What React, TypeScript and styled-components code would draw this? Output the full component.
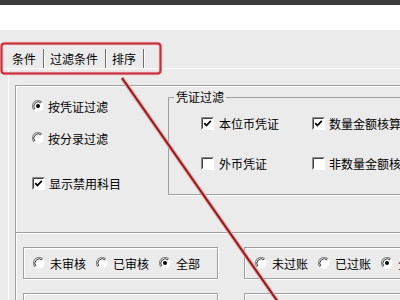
import React from "react";
import styled, { createGlobalStyle } from "styled-components";

const GlobalStyle = createGlobalStyle`
  * { box-sizing: border-box; }
  html, body { margin: 0; padding: 0; background: #ebebeb; }
  body {
    font-family: "Noto Sans CJK SC", "Noto Sans", sans-serif;
    font-size: 12px;
    color: #000;
  }
`;

const RadioMark = ({ checked }: { checked?: boolean }) => (
  <MarkSvg width={12} height={12} viewBox="0 0 12 12">
    <circle cx="6" cy="6" r="5.5" fill="#fff" />
    <path d="M2.1 9.9 A5.5 5.5 0 0 1 9.9 2.1" fill="none" stroke="#8a8a8a" strokeWidth="1.2" />
    <path d="M2.9 9.1 A4.4 4.4 0 0 1 9.1 2.9" fill="none" stroke="#3a3a3a" strokeWidth="1" />
    {checked && <circle cx="6" cy="6" r="2" fill="#000" />}
  </MarkSvg>
);

const CheckMark = ({ checked }: { checked?: boolean }) => (
  <MarkSvg width={13} height={13} viewBox="0 0 13 13">
    <rect x="0" y="0" width="13" height="13" fill="#fff" />
    <path d="M0.5 12.5 V0.5 H12.5" fill="none" stroke="#8a8a8a" strokeWidth="1" />
    <path d="M1.5 11.5 V1.5 H11.5" fill="none" stroke="#404040" strokeWidth="1" />
    {checked && (
      <path d="M3.3 6.2 L5.4 8.5 L9.8 3.8" fill="none" stroke="#000" strokeWidth="1.8" />
    )}
  </MarkSvg>
);

type Kind = "radio" | "check";

const Choice = ({
  kind,
  checked,
  label,
  gap,
  offset = 0,
}: {
  kind: Kind;
  checked?: boolean;
  label: string;
  gap: number;
  offset?: number;
}) => (
  <Option $gap={gap} $offset={offset}>
    {kind === "radio" ? <RadioMark checked={checked} /> : <CheckMark checked={checked} />}
    <span>{label}</span>
  </Option>
);

const App = () => {
  return (
    <Screen>
      <GlobalStyle />
      <TopBar />
      <WhiteBand />
      <TabStrip>
        <Tab>条件</Tab>
        <Tab>过滤条件</Tab>
        <Tab>排序</Tab>
      </TabStrip>
      <TabBody>
        <Frame>
          <Upper>
            <LeftCol>
              <Choice kind="radio" checked label="按凭证过滤" gap={4} />
              <Choice kind="radio" label="按分录过滤" gap={4} offset={16} />
              <Choice kind="check" checked label="显示禁用科目" gap={4} offset={29} />
            </LeftCol>
            <GroupBox>
              <Legend>凭证过滤</Legend>
              <GroupGrid>
                <Choice kind="check" checked label="本位币凭证" gap={5} />
                <Choice kind="check" checked label="数量金额核算" gap={4} />
                <Choice kind="check" label="外币凭证" gap={5} />
                <Choice kind="check" label="非数量金额核算" gap={4} />
              </GroupGrid>
            </GroupBox>
          </Upper>
          <Lower>
            <RadioBox $pad={9}>
              <Choice kind="radio" label="未审核" gap={5} />
              <Choice kind="radio" label="已审核" gap={5} />
              <Choice kind="radio" checked label="全部" gap={5} />
            </RadioBox>
            <RadioBox $pad={10}>
              <Choice kind="radio" label="未过账" gap={5} />
              <Choice kind="radio" label="已过账" gap={5} />
              <Choice kind="radio" checked label="全部" gap={5} />
            </RadioBox>
            <RadioBox $pad={9} />
            <RadioBox $pad={10} />
          </Lower>
        </Frame>
      </TabBody>

      <Annotation width={400} height={300} viewBox="0 0 400 300">
        <rect x="1.5" y="43.5" width="159" height="30" rx="3" fill="none" stroke="#f0b4b8" strokeWidth="3.5" />
        <rect x="1.5" y="43.5" width="159" height="30" rx="3" fill="none" stroke="#c4303c" strokeWidth="2" />
        <line x1="122" y1="78" x2="278" y2="302" stroke="#eaa4a4" strokeWidth="4" />
        <line x1="122" y1="78" x2="278" y2="302" stroke="#8c1c1e" strokeWidth="2" />
      </Annotation>
    </Screen>
  );
};

export default App;

const Screen = styled.div`
  position: relative;
  width: 400px;
  height: 300px;
  overflow: hidden;
  background: #ebebeb;
`;

const TopBar = styled.div`
  height: 5px;
  background: #3a3a3a;
`;

const WhiteBand = styled.div`
  height: 25px;
  background: #fff;
`;

const TabStrip = styled.div`
  display: flex;
  align-items: flex-end;
  height: 39px;
  padding-left: 6px;
  border-bottom: 1px solid #fff;
`;

const Tab = styled.div`
  height: 19px;
  line-height: 19px;
  padding: 0 7px 0 6px;
  border-right: 1px solid #6e6e6e;
  box-shadow: 1px 0 0 #fff;
  white-space: nowrap;
`;

const TabBody = styled.div`
  height: 231px;
  margin-left: 8px;
  padding: 16px 0 0 6px;
  border-left: 1px solid #fff;
`;

const Frame = styled.div`
  height: 100%;
  border-top: 1px solid #a0a0a0;
  border-left: 1px solid #a0a0a0;
  box-shadow: inset 1px 1px 0 #fff;
`;

const Upper = styled.div`
  display: flex;
  height: 147px;
  border-bottom: 1px solid #a0a0a0;
  box-shadow: 0 1px 0 #fff;
`;

const LeftCol = styled.div`
  flex: none;
  width: 152px;
  display: flex;
  flex-direction: column;
  padding: 12px 0 0 16px;
`;

const Option = styled.label<{ $gap: number; $offset: number }>`
  display: flex;
  align-items: center;
  height: 16px;
  gap: ${(p) => p.$gap}px;
  margin-top: ${(p) => p.$offset}px;
  white-space: nowrap;
`;

const MarkSvg = styled.svg`
  flex: none;
  display: block;
`;

const GroupBox = styled.fieldset`
  flex: none;
  width: 260px;
  height: 105px;
  margin: 4px 0 0 0;
  padding: 0;
  border: 1px solid #a0a0a0;
  box-shadow: 1px 1px 0 #fff;
`;

const Legend = styled.legend`
  margin-left: 5px;
  padding: 0 2px;
  line-height: 14px;
  font-size: 12px;
`;

const GroupGrid = styled.div`
  display: grid;
  grid-template-columns: 111px max-content;
  row-gap: 24px;
  padding: 11px 0 0 32px;
`;

const Lower = styled.div`
  display: grid;
  grid-template-columns: 195px 195px;
  column-gap: 26px;
  row-gap: 14px;
  padding: 14px 0 0 7px;
`;

const RadioBox = styled.div<{ $pad: number }>`
  display: flex;
  align-items: center;
  gap: 10px;
  height: 32px;
  padding-left: ${(p) => p.$pad}px;
  border: 1px solid #a0a0a0;
  box-shadow: inset 1px 1px 0 #fff, 1px 1px 0 #fff;
`;

const Annotation = styled.svg`
  position: absolute;
  top: 0;
  left: 0;
  pointer-events: none;
`;
